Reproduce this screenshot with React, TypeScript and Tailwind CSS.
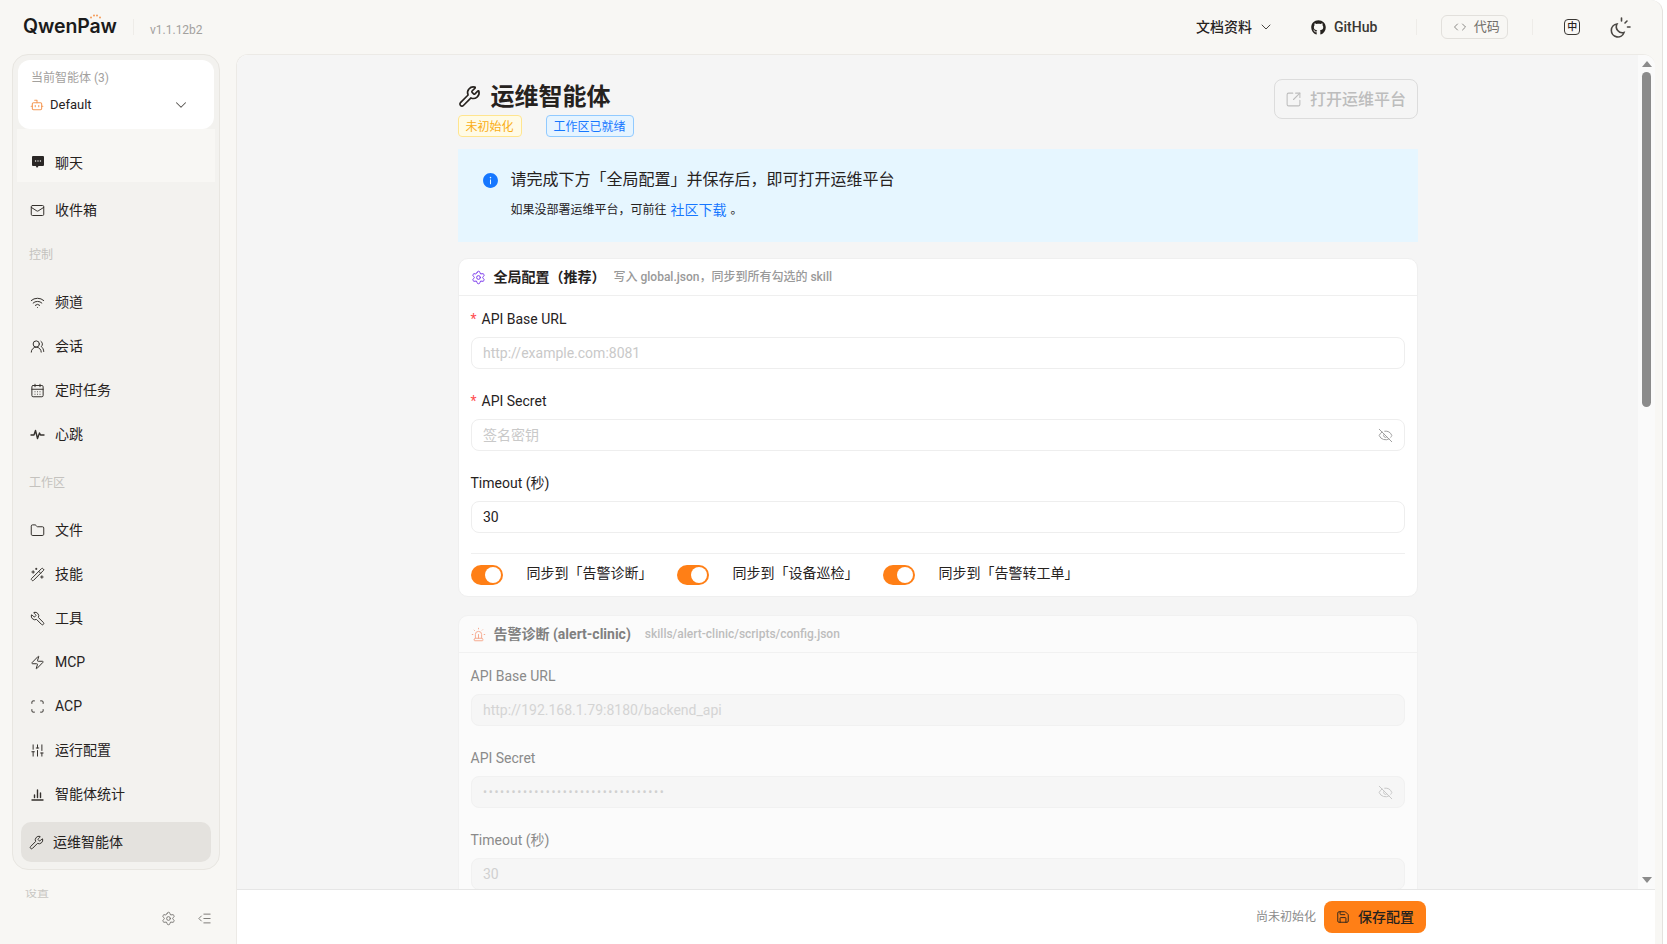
import type { ElementType, ReactNode } from "react";
import {
  Bot,
  CalendarDays,
  ChevronDown,
  ChevronLeft,
  ChevronRight,
  EyeOff,
  Folder,
  IndentDecrease,
  Mail,
  Save,
  Scan,
  Settings,
  Siren,
  SlidersVertical,
  SquareArrowOutUpRight,
  UsersRound,
  WandSparkles,
  Wifi,
  Wrench,
  Zap,
} from "lucide-react";
import { AiFillInfoCircle } from "react-icons/ai";
import { FaGithub } from "react-icons/fa";

const fontStack = { fontFamily: '"Roboto", "Noto Sans CJK SC", sans-serif' };

function PulseIcon({ className }: { size?: number; strokeWidth?: number; className?: string }) {
  return (
    <svg width="15" height="15" viewBox="0 0 15 15" fill="none" stroke="currentColor" strokeWidth="1.4" strokeLinejoin="round" strokeLinecap="round" className={className}>
      <path d="M1 8h3l1.5-4.5 2 8L9.500 6l1 2H14" />
    </svg>
  );
}

function BarsIcon({ className }: { size?: number; strokeWidth?: number; className?: string }) {
  return (
    <svg width="15" height="15" viewBox="0 0 15 15" fill="none" stroke="currentColor" strokeWidth="1.4" strokeLinecap="round" className={className}>
      <path d="M2 13h11M4.500 10.500V8M7.500 10.500V3M10.500 10.500V6" />
    </svg>
  );
}

function ToolIcon({ className }: { size?: number; strokeWidth?: number; className?: string }) {
  return <Wrench size={15} strokeWidth={1.6} className={`-scale-x-100 ${className}`} />;
}

const controlItems = [
  { label: "频道", icon: Wifi },
  { label: "会话", icon: UsersRound },
  { label: "定时任务", icon: CalendarDays },
  { label: "心跳", icon: PulseIcon },
];

const workspaceItems = [
  { label: "文件", icon: Folder },
  { label: "技能", icon: WandSparkles },
  { label: "工具", icon: ToolIcon },
  { label: "MCP", icon: Zap },
  { label: "ACP", icon: Scan },
  { label: "运行配置", icon: SlidersVertical },
  { label: "智能体统计", icon: BarsIcon },
];

const syncTargets = [
  { label: "同步到「告警诊断」", width: "w-[206px]" },
  { label: "同步到「设备巡检」", width: "w-[206px]" },
  { label: "同步到「告警转工单」", width: "w-[220px]" },
];

function NavRow({ label, icon: Icon }: { label: string; icon: ElementType }) {
  return (
    <div className="flex h-[44px] items-center gap-[10px] pl-[12px] text-sm text-[#26221e]">
      <Icon size={15} strokeWidth={1.6} className="shrink-0 text-[#34312d]" />
      <span>{label}</span>
    </div>
  );
}

function GroupLabel({ children }: { children: ReactNode }) {
  return (
    <div className="mb-[8px] flex h-[34px] items-center pl-[11px] text-xs text-[#c4c2be]">
      {children}
    </div>
  );
}

function Sidebar() {
  return (
    <aside className="flex w-[236px] shrink-0 flex-col pl-[12px]">
      <div className="h-[816px] w-[208px] rounded-2xl border border-[#e8e6e1] bg-[#f3f2ef] p-[5px]">
        <div className="h-[69px] rounded-xl bg-white pl-[12px] pr-[24px] pt-[10px]">
          <div className="ml-px text-xs leading-[16px] text-[#a3a19e]">当前智能体 (3)</div>
          <div className="mt-[7px] flex h-[24px] items-center">
            <Bot size={14} strokeWidth={1.8} className="text-[#f59a57]" />
            <span className="ml-[6px] text-[13px] text-[#26221e]">Default</span>
            <ChevronDown size={18} strokeWidth={1.4} className="ml-auto text-[#55524e]" />
          </div>
        </div>

        <div className="-mx-px h-[53px] bg-[#f8f7f4] pl-[14px] pt-[15px]">
          <div className="flex h-[38px] items-center gap-[10px] text-sm text-[#26221e]">
            <svg width="14" height="14" viewBox="0 0 14 14" className="-mt-[2px] shrink-0">
              <path d="M2 1h10a1 1 0 0 1 1 1v8a1 1 0 0 1-1 1H7.500L6 13l-1.200-2H2a1 1 0 0 1-1-1V2a1 1 0 0 1 1-1z" fill="#2a2725" />
              <circle cx="4.600" cy="6" r=".7" fill="#f3f2ef" />
              <circle cx="7" cy="6" r=".7" fill="#f3f2ef" />
              <circle cx="9.400" cy="6" r=".7" fill="#f3f2ef" />
            </svg>
            <span>聊天</span>
          </div>
        </div>
        <div className="flex h-[56px] items-center gap-[10px] pl-[12px] text-sm text-[#26221e]">
          <Mail size={15} strokeWidth={1.6} className="text-[#34312d]" />
          <span>收件箱</span>
        </div>

        <GroupLabel>控制</GroupLabel>
        {controlItems.map((item) => (
          <NavRow key={item.label} {...item} />
        ))}

        <div className="mt-[10px]">
          <GroupLabel>工作区</GroupLabel>
        </div>
        {workspaceItems.map((item) => (
          <NavRow key={item.label} {...item} />
        ))}

        <div className="mx-[3px] mt-[6px] flex h-[40px] items-center gap-[9px] rounded-[10px] bg-[#e4e2de] pl-[8px] text-sm text-[#26221e]">
          <Wrench size={15} strokeWidth={1.6} className="text-[#34312d]" />
          <span>运维智能体</span>
        </div>
      </div>

      <div className="ml-[13px] mt-[19px] h-[9px] overflow-hidden text-xs leading-[9px] text-[#c9c7c3]">设置</div>
      <div className="mr-[24px] mt-[13px] flex items-center justify-end gap-[21px] text-[#6f6d69]">
        <Settings size={15} strokeWidth={1.4} />
        <IndentDecrease size={15} strokeWidth={1.4} />
      </div>
    </aside>
  );
}

function Header() {
  return (
    <header className="flex h-[54px] shrink-0 items-center text-[#26221e]">
      <div className="relative ml-[23px] w-[95px] font-['Inter'] text-[19.500px] font-semibold leading-none tracking-[-0.1px] text-[#1b1b1b]">
        QwenPaw
        <svg width="12" height="5" viewBox="0 0 12 5" className="absolute left-[66px] top-[-3px]">
          <circle cx="2" cy="3.500" r="1" fill="#f59a57" />
          <circle cx="5" cy="1.500" r="1" fill="#f59a57" />
          <circle cx="8" cy="1.500" r="1" fill="#f59a57" />
          <circle cx="11" cy="3.500" r="1" fill="#f59a57" />
        </svg>
      </div>
      <div className="ml-[15px] h-[16px] w-px bg-[#eeece8]" />
      <span className="ml-[16px] mt-[6px] w-[50px] text-xs text-[#a3a19e]">v1.1.12b2</span>

      <span className="ml-[996px] text-sm font-medium">文档资料</span>
      <ChevronDown size={16} strokeWidth={1.4} className="ml-[6px] text-[#3a3733]" />
      <FaGithub size={15} className="ml-[37px]" />
      <span className="ml-[8px] text-sm font-medium text-[#3a3733]">GitHub</span>
      <div className="ml-[39px] h-[16px] w-px bg-[#eeece8]" />
      <div className="ml-[24px] flex h-[24px] w-[67px] items-center justify-center gap-[4px] rounded-md border border-[#e2e0dc] text-[13px] text-[#6f6d69]">
        <span className="flex">
          <ChevronLeft size={12} strokeWidth={1.6} className="-mr-[2px]" />
          <ChevronRight size={12} strokeWidth={1.6} className="-ml-[2px]" />
        </span>
        代码
      </div>
      <div className="ml-[24px] h-[16px] w-px bg-[#eeece8]" />
      <div className="ml-[31px] flex h-[16px] w-[16px] items-center justify-center rounded-[4px] border-[1.5px] border-[#3a3733] text-[10px] font-medium leading-none">
        中
      </div>
      <svg width="24" height="24" viewBox="0 0 24 24" fill="none" stroke="#4a4743" strokeWidth="1.6" strokeLinecap="round" className="ml-[28px]">
        <path d="M9 9a6.500 6.500 0 1 0 7 8.500 6 6 0 0 1-7-8.500z" />
        <path d="M13.500 3v3M19 6l-2 2M22 12h-2.500" />
      </svg>
    </header>
  );
}

function Field({
  label,
  required,
  disabled,
  value,
  placeholder,
  secret,
}: {
  label: ReactNode;
  required?: boolean;
  disabled?: boolean;
  value?: string;
  placeholder?: string;
  secret?: boolean;
}) {
  return (
    <div className="mb-[22px]">
      <div className={`flex h-[19px] items-center text-sm ${disabled ? "text-[#8a8a8a]" : "text-[#26221e]"}`}>
        {required ? <span className="mr-[5px] text-[#ff4d4f]">*</span> : null}
        {label}
      </div>
      <div
        className={`mt-[9px] flex h-[32px] items-center justify-between rounded-lg border pl-[11.500px] pr-[11px] text-sm ${
          disabled ? "border-[#f1f1f1] bg-[#f6f6f6]" : "border-[#eeeeee] bg-white"
        }`}
      >
        {value ? (
          <span className={`${disabled ? "text-[#d0d0d0]" : "text-[#26221e]"} ${secret ? "text-xs tracking-[1.650px]" : ""}`}>{value}</span>
        ) : (
          <span className={disabled ? "text-[#d4d4d4]" : "text-[#c9c9c9]"}>{placeholder}</span>
        )}
        {secret ? <EyeOff size={15} strokeWidth={1.5} className={disabled ? "text-[#c4c4c4]" : "text-[#9a9a9a]"} /> : null}
      </div>
    </div>
  );
}

function Main() {
  return (
    <main className="flex h-[890px] w-[1419px] shrink-0 flex-col overflow-hidden rounded-t-xl border-l border-t border-[#eceae6] bg-white">
      <div className="flex min-h-0 flex-1">
        <div className="flex min-w-0 flex-1 justify-center overflow-hidden bg-[#f5f5f5]">
          <div className="w-[960px] pt-[24px]">
            <div className="flex items-start justify-between">
              <div>
                <div className="flex h-[34px] items-center pt-[1px]">
                  <Wrench size={23} strokeWidth={1.7} className="text-[#26221e]" />
                  <h1 className="ml-[10px] text-2xl font-bold text-[#26221e]">运维智能体</h1>
                </div>
                <div className="mt-[2px] flex gap-[24px] text-xs">
                  <span className="flex h-[22px] items-center rounded border border-[#ffe58f] bg-[#fffbe6] px-[7px] pt-px text-[#faad14]">未初始化</span>
                  <span className="flex h-[22px] items-center rounded border border-[#91caff] bg-[#e6f4ff] px-[7px] pt-px text-[#1677ff]">工作区已就绪</span>
                </div>
              </div>
              <button className="flex h-[40px] w-[144px] items-center justify-center gap-[8px] rounded-lg border border-[#dcdcdc] pt-px text-base font-medium text-[#bdbdbd]">
                <SquareArrowOutUpRight size={17} strokeWidth={1.5} />
                打开运维平台
              </button>
            </div>

            <div className="mt-[12px] h-[93px] bg-[#e6f6ff] pl-[24px] pt-[19px]">
              <div className="flex h-[24px] items-center text-base text-[#26221e]">
                <AiFillInfoCircle size={17} className="text-[#1677ff]" />
                <span className="ml-[12px]">请完成下方「全局配置」并保存后，即可打开运维平台</span>
              </div>
              <div className="ml-[29px] mt-[6px] flex h-[24px] items-center text-xs text-[#26221e]">
                如果没部署运维平台，可前往
                <span className="ml-[4px] text-sm text-[#1677ff]">社区下载</span>
                <span className="ml-[4px]">。</span>
              </div>
            </div>

            <section className="mt-[16px] h-[339px] rounded-[10px] border border-[#efefef] bg-white">
              <div className="flex h-[37px] items-center border-b border-[#efefef] pl-[12px]">
                <Settings size={15} strokeWidth={1.6} className="text-[#7c3aed]" />
                <span className="ml-[8px] text-sm font-bold text-[#26221e]">全局配置（推荐）</span>
                <span className="ml-[8px] text-xs font-medium text-[#999999]">写入 global.json，同步到所有勾选的 skill</span>
              </div>
              <div className="px-[12px] pt-[13px]">
                <Field label="API Base URL" required placeholder="http://example.com:8081" />
                <Field label="API Secret" required placeholder="签名密钥" secret />
                <Field label="Timeout (秒)" value="30" />
                <div className="-mt-[2px] flex h-[42px] items-center border-t border-[#efefef]">
                  {syncTargets.map((target) => (
                    <div key={target.label} className={`flex items-center ${target.width}`}>
                      <div className="flex h-[20px] w-[32px] items-center justify-end rounded-full bg-[#ff7f16] pr-[2px]">
                        <div className="h-[16px] w-[16px] rounded-full bg-white" />
                      </div>
                      <span className="-mt-[3px] ml-[24px] text-sm text-[#26221e]">{target.label}</span>
                    </div>
                  ))}
                </div>
              </div>
            </section>

            <section className="mt-[18px] rounded-t-[10px] border border-[#f1f1f1] bg-[#fbfbfb]">
              <div className="flex h-[37px] items-center border-b border-[#f1f1f1] pl-[12px]">
                <Siren size={15} strokeWidth={1.5} className="text-[#f5a58a]" />
                <span className="ml-[8px] text-sm font-bold text-[#808080]">告警诊断 (alert-clinic)</span>
                <span className="ml-[14px] text-xs font-medium text-[#bdbdbd]">skills/alert-clinic/scripts/config.json</span>
              </div>
              <div className="px-[12px] pt-[13px]">
                <Field label="API Base URL" disabled placeholder="http://192.168.1.79:8180/backend_api" />
                <Field label="API Secret" disabled value="••••••••••••••••••••••••••••••••" secret />
                <Field label="Timeout (秒)" disabled value="30" />
              </div>
            </section>
          </div>
        </div>

        <div className="flex w-[17px] shrink-0 flex-col items-center bg-[#fafafa]">
          <svg width="10" height="6" viewBox="0 0 10 6" className="mt-[6px]">
            <path d="M5 0l5 6H0z" fill="#8b8b8b" />
          </svg>
          <div className="mt-[5px] h-[335px] w-[9px] rounded-full bg-[#8b8b8b]" />
          <svg width="10" height="6" viewBox="0 0 10 6" className="mb-[6px] mt-auto">
            <path d="M5 6L0 0h10z" fill="#8b8b8b" />
          </svg>
        </div>
      </div>

      <footer className="flex h-[55px] shrink-0 items-center justify-end border-t border-[#e6e6e6] bg-white pr-[229px]">
        <span className="text-xs text-[#8a8a8a]">尚未初始化</span>
        <button className="ml-[8px] flex h-[32px] w-[102px] items-center justify-center gap-[8px] rounded-lg bg-[#ff7f16] text-sm font-medium text-[#26221e]">
          <Save size={14} strokeWidth={1.6} />
          保存配置
        </button>
      </footer>
    </main>
  );
}

export default function App() {
  return (
    <div className="h-[944px] w-[1667px] overflow-hidden bg-white" style={fontStack}>
      <div className="flex h-full w-[1663px] flex-col rounded-tr-xl border-r border-[#e4e2de] bg-[#f8f7f4]">
        <Header />
        <div className="flex min-h-0 flex-1">
          <Sidebar />
          <Main />
        </div>
      </div>
    </div>
  );
}
